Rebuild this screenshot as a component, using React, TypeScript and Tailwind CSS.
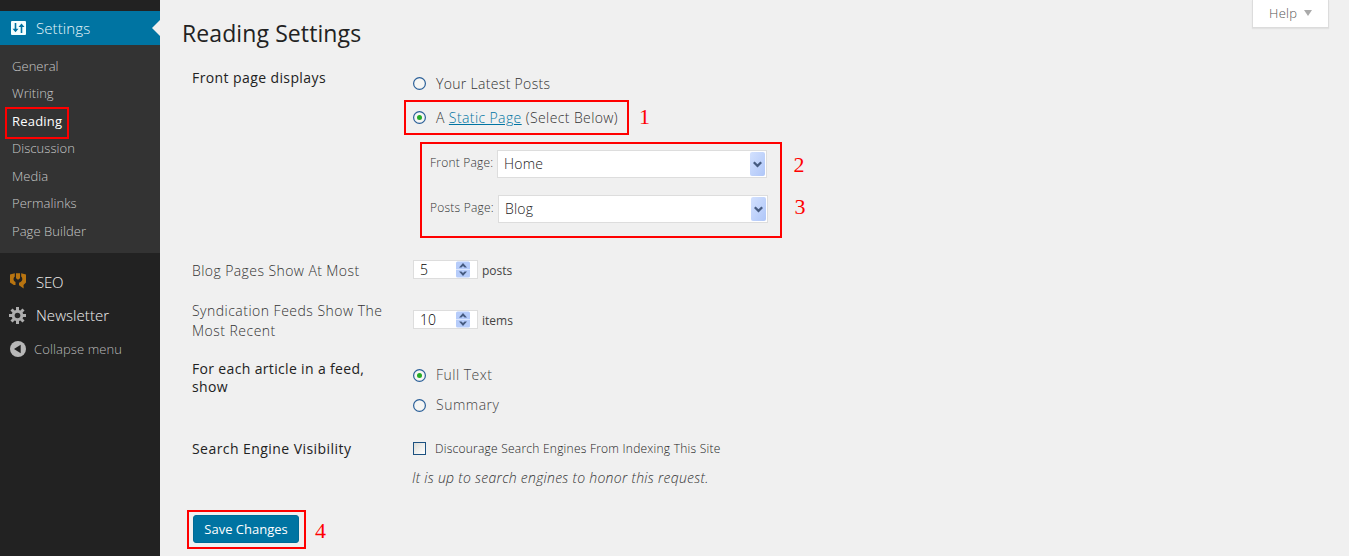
import type { ReactNode } from "react";

function Radio({ checked = false }: { checked?: boolean }) {
  return (
    <svg width="13" height="13" viewBox="0 0 13 13" className="shrink-0">
      <circle cx="6.5" cy="6.5" r="5.9" fill="#f6f6f4" stroke="#2a5f98" strokeWidth="1.2" />
      {checked && <circle cx="6.5" cy="6.5" r="2.5" fill="#25ab25" />}
    </svg>
  );
}

function Dropdown({ value }: { value: string }) {
  return (
    <div className="flex h-[28px] w-[270px] items-center justify-between border border-[#dddddd] bg-white pr-px pl-[6px]">
      <span className="-mt-[2px] text-[14px] tracking-[0.2px] text-[#222]">{value}</span>
      <span className="flex h-[24px] w-[15px] items-center justify-center rounded-[2px] bg-linear-to-br from-[#d3e1fe] to-[#afc6f8]">
        <svg width="9" height="7" viewBox="0 0 9 7">
          <path d="M0.8 1.2 4.5 4.8 8.2 1.2" fill="none" stroke="#465b80" strokeWidth="2.3" />
        </svg>
      </span>
    </div>
  );
}

function NumberField({ value, unit }: { value: string; unit: string }) {
  return (
    <div className="flex items-start gap-[4px] text-[12px] text-[#444]">
      <div className="flex h-[19px] w-[65px] items-center justify-between border border-[#dddddd] bg-white pr-[7px] pl-[6px]">
        <span className="text-[14px] font-light text-black">{value}</span>
        <svg width="14" height="17" viewBox="0 0 14 17">
          <rect y="0.5" width="14" height="16" rx="1.5" fill="#b6ccfa" />
          <path d="M0 8.5h14" stroke="#dce7fe" />
          <path d="M3 6.5 7 2l4 4.5H8.6L7 5 5.4 6.5zM3 10.5 7 15l4-4.5H8.6L7 12l-1.6-1.5z" fill="#465b80" />
        </svg>
      </div>
      <span className="leading-[22px]">{unit}</span>
    </div>
  );
}

function Row({ label, className, children }: { label: ReactNode; className: string; children?: ReactNode }) {
  return (
    <div className={`flex pl-[10px] ${className}`}>
      <div className="w-[221px] shrink-0 whitespace-nowrap">{label}</div>
      <div>{children}</div>
    </div>
  );
}

function Mark({ children, className }: { children: string; className: string }) {
  return (
    <span className={`absolute font-['Liberation_Serif',serif] text-[22px] leading-[24px] tracking-normal text-[#f00] ${className}`}>
      {children}
    </span>
  );
}

function Frame({ className }: { className: string }) {
  return <span className={`pointer-events-none absolute border-2 border-[#f00] ${className}`} />;
}

const submenu = ["General", "Writing", "Reading", "Discussion", "Media", "Permalinks", "Page Builder"];

function Sidebar() {
  return (
    <aside className="w-[160px] shrink-0 bg-[#222] pt-[11px]">
      <div className="relative flex h-[34px] items-center bg-[#0074a2] pl-[11px] text-[15px] text-[#e6f4fa]">
        <svg width="15" height="14" viewBox="0 0 15 14">
          <rect width="15" height="14" rx="1" fill="#f4ffff" />
          <path d="M4.5 2v8M10.5 4v8" stroke="#0074a2" strokeWidth="1.6" />
          <path d="M1.5 7.8h6l-3 3.5zM7.5 6h6l-3-3.5z" fill="#0074a2" />
        </svg>
        <span className="ml-[10px] font-light tracking-[0.1px]">Settings</span>
        <svg width="8" height="16" viewBox="0 0 8 16" className="absolute top-[9px] right-0">
          <path d="M8 0v16L0 8z" fill="#f0f0f0" />
        </svg>
      </div>
      <ul className="h-[208px] bg-[#333] pt-[7px] pl-[12px] text-[13px]">
        {submenu.map((item) => (
          <li key={item} className="relative flex h-[27.5px] items-center">
            {item === "Reading" ? (
              <>
                <span className="pt-[2px] tracking-[0.2px] text-white">{item}</span>
                <Frame className="top-0 -left-[7px] h-[32px] w-[64px]" />
              </>
            ) : (
              <span className="pt-[1.6px] font-light tracking-[0.05px] text-[#c8c8c8]">{item}</span>
            )}
          </li>
        ))}
      </ul>
      <div className="pt-[12px] pl-[9px] text-[15px] font-light text-[#f0f0f0]">
        <div className="flex h-[34px] items-center">
          <svg width="18" height="16" viewBox="0 0 18 16" className="-mt-[3px]">
            <path
              d="M1 1.5 5.8 0.3v3.2C3.9 5 4.2 8 6.5 9v3H4.8L1 9.5zM7 0.3h4v5L9 6.8 7 5.3zM12.2 0.3 17 1.5v8l-2.500 2.500.2 3.600-4.700-3.400V9.800c3.700-1.500 4.200-4 2.200-6.300z"
              fill="#b87410"
            />
          </svg>
          <span className="ml-[9px] tracking-[-0.2px]">SEO</span>
        </div>
        <div className="flex h-[34px] items-center">
          <svg width="17" height="17" viewBox="0 0 17 17" className="-mt-[2px]">
            <g stroke="#aeaeae" strokeWidth="3">
              <path d="M8.5 0v17M0 8.5h17M2.5 2.5l12 12M14.5 2.5l-12 12" />
            </g>
            <circle cx="8.5" cy="8.5" r="5.8" fill="#aeaeae" />
            <circle cx="8.5" cy="8.5" r="2.8" fill="#282828" />
          </svg>
          <span className="-mt-[2px] ml-[10px] tracking-[0.05px]">Newsletter</span>
        </div>
        <div className="flex h-[33px] items-center">
          <svg width="18" height="16" viewBox="0 0 18 16" className="-mt-[2px]">
            <circle cx="9" cy="8" r="8" fill="#b8b8b8" />
            <path d="M11.7 3.8v8.400L5 8z" fill="#202020" />
          </svg>
          <span className="ml-[7px] text-[13px] tracking-[0.1px] text-[#bbb]">Collapse menu</span>
        </div>
      </div>
    </aside>
  );
}

export default function App() {
  return (
    <div className="flex h-[556px] w-[1349px] overflow-hidden bg-[#f0f0f0] font-['Open_Sans',sans-serif] text-[#222]">
      <Sidebar />
      <main className="flex min-w-0 flex-1 flex-col pl-[22px]">
        <header className="flex h-[64px] shrink-0 items-start justify-between pr-[20px]">
          <h1 className="pt-[18px] text-[23px] leading-[30px] font-normal tracking-[0.1px]">Reading Settings</h1>
          <button className="flex h-[28px] w-[77px] items-center gap-[7px] border border-t-0 border-[#dcdcdc] bg-white pl-[16px] text-[13px] font-light tracking-[0.3px] text-[#555] shadow-[0_1px_1px_#e2e2e2]">
            Help
            <svg width="8" height="6" viewBox="0 0 8 6" className="-mt-[2px]">
              <path d="M0 0h8L4 6z" fill="#aaa" />
            </svg>
          </button>
        </header>

        <Row
          className="h-[191px] shrink-0"
          label={<span className="block pt-[4px] text-[14px] leading-[20px] tracking-[0.4px]">Front page displays</span>}
        >
          <div className="text-[14px] font-light tracking-[0.4px] text-[#333]">
            <label className="flex items-center gap-[10px] pt-[10px] leading-[20px] tracking-[0.32px]">
              <span className="-mt-px">
                <Radio />
              </span>
              Your Latest Posts
            </label>
            <div className="relative mt-[14px]">
              <label className="flex items-center gap-[10px] leading-[20px] whitespace-nowrap">
                <span className="-mt-px">
                  <Radio checked />
                </span>
                <span>
                  A <a className="text-[#0074a2] underline">Static Page</a> (Select Below)
                </span>
              </label>
              <Frame className="-top-[8px] -left-[9px] h-[35px] w-[225px]" />
              <Mark className="-top-[3px] left-[226px]">1</Mark>
            </div>
            <div className="relative mt-[14px] ml-[7px] h-[96px] w-[362px] border-2 border-[#f00] pt-[6px] pl-[8px] text-[12px] tracking-[0.22px]">
              <div className="flex items-center whitespace-nowrap">
                <span className="-mt-[2px] w-[67px]">Front Page:</span>
                <Dropdown value="Home" />
              </div>
              <div className="mt-[17px] flex items-center whitespace-nowrap">
                <span className="-mt-[2px] w-[68px]">Posts Page:</span>
                <Dropdown value="Blog" />
              </div>
              <Mark className="top-[9px] left-[371.5px]">2</Mark>
              <Mark className="top-[51px] left-[372.5px]">3</Mark>
            </div>
          </div>
        </Row>

        <Row
          className="h-[46px] shrink-0 pt-[5px]"
          label={<span className="block pt-px text-[14px] leading-[20px] font-light tracking-[0.42px] text-[#333]">Blog Pages Show At Most</span>}
        >
          <NumberField value="5" unit="posts" />
        </Row>

        <Row
          className="h-[57px] shrink-0"
          label={
            <span className="block text-[14px] leading-[20px] font-light tracking-[0.48px] text-[#333]">
              Syndication Feeds Show The
              <br />
              Most Recent
            </span>
          }
        >
          <div className="pt-[9px]">
            <NumberField value="10" unit="items" />
          </div>
        </Row>

        <Row
          className="h-[80px] shrink-0"
          label={
            <span className="block pt-[2px] text-[14px] leading-[18px] tracking-[0.34px]">
              For each article in a feed,
              <br />
              show
            </span>
          }
        >
          <div className="flex flex-col gap-[10px] pt-[7px] text-[14px] leading-[20px] font-light tracking-[0.5px] text-[#444]">
            <label className="flex items-center gap-[10px]">
              <Radio checked />
              Full Text
            </label>
            <label className="flex items-center gap-[10px]">
              <Radio />
              Summary
            </label>
          </div>
        </Row>

        <Row
          className="h-[72px] shrink-0"
          label={<span className="block text-[14px] leading-[22px] tracking-[0.44px]">Search Engine Visibility</span>}
        >
          <label className="flex h-[20px] items-center gap-[9px] text-[12px] font-light tracking-[0.24px] whitespace-nowrap text-[#222]">
            <span className="size-[13px] border border-[#1c5180] bg-linear-to-br from-[#dcdcd7] to-white" />
            <span className="pt-[2px]">Discourage Search Engines From Indexing This Site</span>
          </label>
          <p className="mt-[10px] -ml-px text-[14px] leading-[20px] font-light tracking-[0.27px] whitespace-nowrap text-[#333] italic">
            It is up to search engines to honor this request.
          </p>
        </Row>

        <div className="relative ml-[5px] h-[39px] w-[119px] shrink-0 border-2 border-[#f00] pt-[3px] pl-[4px]">
          <button className="block h-[28px] w-[106px] rounded-[3px] border border-[#006a95] bg-[#0074a2] text-[13px] leading-[26px] text-white">
            Save Changes
          </button>
          <Mark className="top-[7px] left-[126px]">4</Mark>
        </div>
      </main>
    </div>
  );
}
